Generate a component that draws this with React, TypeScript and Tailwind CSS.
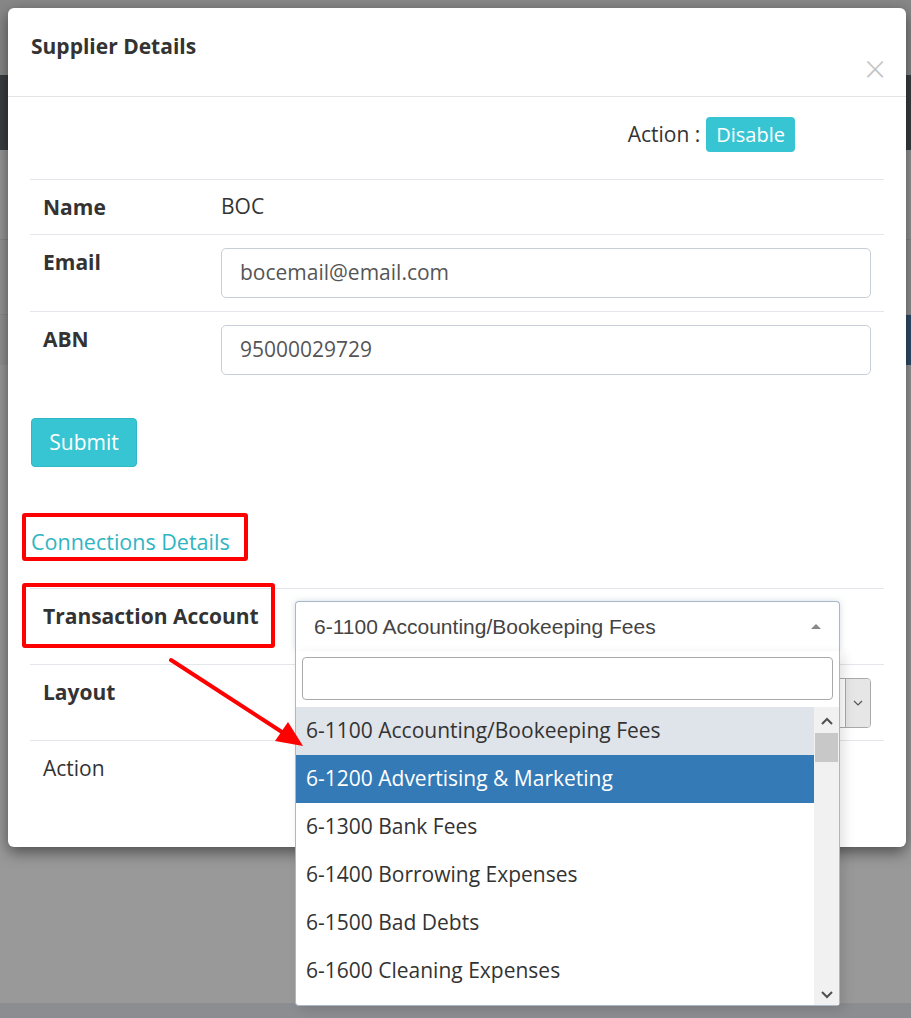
import React from 'react';

const options = [
  '6-1100 Accounting/Bookeeping Fees',
  '6-1200 Advertising & Marketing',
  '6-1300 Bank Fees',
  '6-1400 Borrowing Expenses',
  '6-1500 Bad Debts',
  '6-1600 Cleaning Expenses',
];

const Backdrop = () => (
  <div className="flex flex-col w-full h-full">
    <div className="h-[75px] bg-[#888888]" />
    <div className="h-[75px] bg-[#3b3e42]" />
    <div className="h-[90px] bg-[#979797] border-b border-[#8a8a8a]" />
    <div className="h-[75px] bg-[#959595] border-b border-[#8a8a8a]" />
    <div className="h-[50px] flex">
      <div className="flex-1 bg-[#939393]" />
      <div className="w-[60px] bg-[#2f4e6a]" />
    </div>
    <div className="flex-1 bg-[#999999]" />
    <div className="h-[15px] bg-[#8c8d90]" />
  </div>
);

// select2 style dropdown, opened
const AccountSelect = () => (
  <div className="relative w-[545px] z-20">
    <div className="h-[50px] flex items-center justify-between pl-[18px] pr-[18px] bg-white border border-b-0 border-[#a9b7ca] rounded-t-[4px] shadow-[0_0_6px_rgba(80,110,150,0.25)]">
      <span className="text-[21px] text-[#444] font-['Liberation_Sans',Arial,sans-serif]">
        6-1100 Accounting/Bookeeping Fees
      </span>
      <span className="w-0 h-0 border-x-[5px] border-x-transparent border-b-[5px] border-b-[#888]" />
    </div>
    <div className="absolute left-0 top-full w-[545px] bg-white border border-t-0 border-[#a9b7ca] rounded-b-[4px] shadow-[4px_4px_12px_rgba(0,0,0,0.12)]">
      <div className="px-[6px] pt-[6px] pb-[7px]">
        <div className="h-[43px] border border-[#aaaaaa] rounded-[4px]" />
      </div>
      <div className="flex h-[298px] overflow-hidden">
        <div className="flex-1">
          {options.map((o, i) => (
            <div
              key={o}
              className={
                'h-[48px] flex items-center pl-[10px] text-[21px] ' +
                (i === 0
                  ? 'bg-[#dfe3ea] text-[#333]'
                  : i === 1
                  ? 'bg-[#337ab7] text-white'
                  : 'text-[#333]')
              }
            >
              {o}
            </div>
          ))}
        </div>
        <div className="w-[25px] bg-[#f1f1f1] flex flex-col items-center">
          <svg width="14" height="10" viewBox="0 0 14 10" className="mt-[9px]">
            <path d="M2 8 L7 3 L12 8" fill="none" stroke="#505050" strokeWidth="2" />
          </svg>
          <div className="w-[23px] h-[29px] bg-[#c8c8c8] mt-[7px]" />
          <div className="flex-1" />
          <svg width="14" height="10" viewBox="0 0 14 10" className="mb-[5px]">
            <path d="M2 2 L7 7 L12 2" fill="none" stroke="#505050" strokeWidth="2" />
          </svg>
        </div>
      </div>
    </div>
  </div>
);

const Row = ({ label, children, tall = true }: { label: string; children?: React.ReactNode; tall?: boolean }) => (
  <div className={'flex border-t border-[#e3e6ea] ' + (tall ? 'min-h-[76px]' : 'h-[55px] items-center')}>
    <div className={'w-[191px] pl-[13px] text-[21px] leading-[28px] font-bold text-[#333] ' + (tall ? 'pt-[13px]' : '')}>
      {label}
    </div>
    <div className={'flex-1 pr-[13px] ' + (tall ? 'py-[13px]' : '')}>{children}</div>
  </div>
);

const Input = ({ value }: { value: string }) => (
  <div className="h-[50px] border border-[#c8ced8] rounded-[5px] flex items-center pl-[18px] text-[21px] text-[#555]">
    {value}
  </div>
);

export default function App() {
  return (
    <div className="relative w-[911px] h-[1018px] overflow-hidden font-['Open_Sans',sans-serif]">
      <Backdrop />

      {/* modal */}
      <div className="absolute left-[8px] top-[8px] w-[898px] h-[839px] bg-white rounded-[6px] shadow-[0_5px_15px_rgba(0,0,0,0.5)]">
        <div className="h-[89px] border-b border-[#e5e5e5] flex justify-between px-[23px] pt-[23px]">
          <h4 className="text-[21px] font-bold text-[#333] leading-[30px]">Supplier Details</h4>
          <span className="text-[38px] font-light text-[#c4c4c4] leading-[30px] mt-[22px] mr-[-3px]">×</span>
        </div>

        <div className="px-[22px] pt-[20px]">
          <div className="flex justify-end items-center pr-[89px] h-[35px] gap-[6px]">
            <span className="text-[21px] text-[#333]">Action :</span>
            <span className="h-[35px] px-[10px] flex items-center bg-[#38c5d3] text-white text-[20px] rounded-[4px]">
              Disable
            </span>
          </div>

          <div className="mt-[27px]">
            <Row label="Name" tall={false}>
              <span className="text-[21px] text-[#333]">BOC</span>
            </Row>
            <Row label="Email">
              <Input value="bocemail@email.com" />
            </Row>
            <Row label="ABN">
              <Input value="95000029729" />
            </Row>
          </div>

          <div className="mt-[30px]">
            <button className="ml-[1px] w-[106px] h-[49px] bg-[#38c5d3] border border-[#2fb8c5] rounded-[4px] text-white text-[21px]">
              Submit
            </button>
          </div>

          <div className="mt-[60px] relative w-fit">
            <h4 className="text-[21.5px] leading-[30px] text-[#2fb5c2] ml-[1px]">Connections Details</h4>
            <div className="absolute left-[-8px] top-[-14px] w-[226px] h-[48px] border-4 border-[#ff0000] rounded-[3px]" />
          </div>

          <div className="mt-[31px]">
            <div className="flex border-t border-[#e3e6ea] h-[76px]">
              <div className="relative w-[252px] pl-[13px] pt-[13px] text-[21px] leading-[28px] font-bold text-[#333]">
                Transaction Account
                <div className="absolute left-[-8px] top-[-6px] w-[253px] h-[65px] border-4 border-[#ff0000] rounded-[3px]" />
              </div>
              <div className="pt-[12px] pl-[13px]">
                <AccountSelect />
              </div>
            </div>
            <div className="flex border-t border-[#e3e6ea] h-[76px]">
              <div className="w-[252px] pl-[13px] pt-[13px] text-[21px] leading-[28px] font-bold text-[#333]">Layout</div>
              <div className="flex-1 pr-[13px] pt-[13px] pl-[13px]">
                <div className="h-[50px] flex border border-[#aaaaaa] rounded-[4px] overflow-hidden">
                  <div className="flex-1" />
                  <div className="w-[25px] bg-[#e6e6e6] border-l border-[#aaaaaa] flex items-center justify-center">
                    <svg width="10" height="8" viewBox="0 0 10 8">
                      <path d="M1 2 L5 6 L9 2" fill="none" stroke="#555" strokeWidth="1.2" />
                    </svg>
                  </div>
                </div>
              </div>
            </div>
            <div className="flex border-t border-[#e3e6ea] h-[76px]">
              <div className="w-[252px] pl-[13px] pt-[13px] text-[21px] leading-[28px] text-[#333]">Action</div>
            </div>
          </div>
        </div>
      </div>

      {/* annotation arrow */}
      <svg className="absolute inset-0 pointer-events-none z-30" width="911" height="1018" viewBox="0 0 911 1018">
        <line x1="171" y1="660" x2="285" y2="734" stroke="#ff0000" strokeWidth="4" strokeLinecap="round" />
        <polygon points="303,746 275,741 288,722" fill="#ff0000" />
      </svg>
    </div>
  );
}
